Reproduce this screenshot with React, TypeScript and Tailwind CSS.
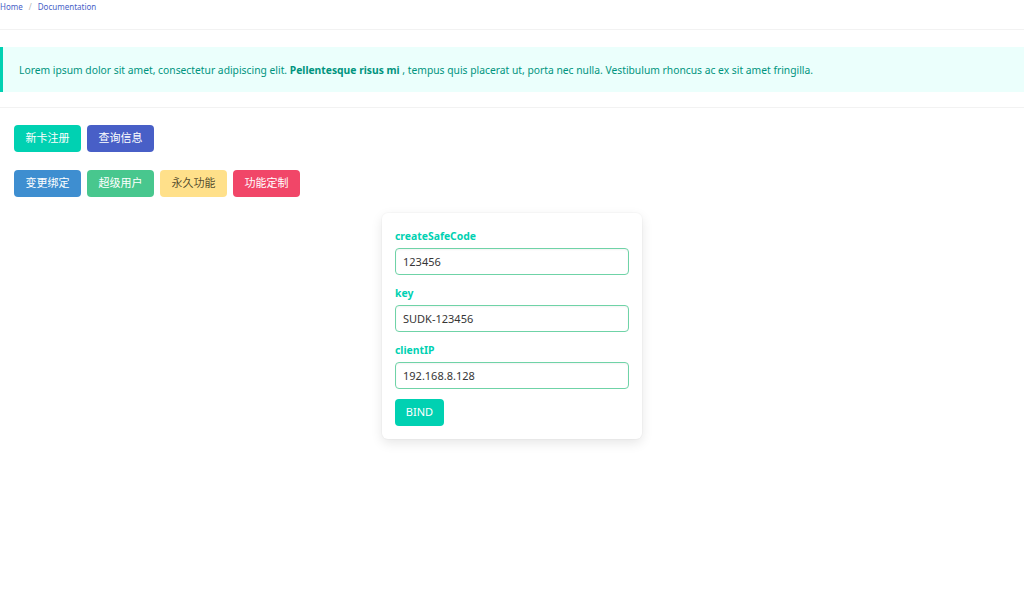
const font = "font-['Noto_Sans','Noto_Sans_CJK_SC',sans-serif]";

const rowOne = [
  { label: "新卡注册", cls: "bg-[#00d1b2] text-white" },
  { label: "查询信息", cls: "bg-[#485fc7] text-white" },
];

const rowTwo = [
  { label: "变更绑定", cls: "bg-[#3e8ed0] text-white" },
  { label: "超级用户", cls: "bg-[#48c78e] text-white" },
  { label: "永久功能", cls: "bg-[#ffe08a] text-black/70" },
  { label: "功能定制", cls: "bg-[#f14668] text-white" },
];

const fields = [
  { label: "createSafeCode", value: "123456" },
  { label: "key", value: "SUDK-123456" },
  { label: "clientIP", value: "192.168.8.128" },
];

function Btn({ label, cls }: { label: string; cls: string }) {
  return (
    <button className={`h-[27px] w-[67px] rounded-[4px] text-[11px] ${cls}`}>
      {label}
    </button>
  );
}

export default function App() {
  return (
    <div className={`min-h-[607px] bg-white text-[#4a4a4a] ${font}`}>
      {/* breadcrumb */}
      <nav className="flex h-[14px] items-center text-[8px] text-[#485fc7]">
        <span>Home</span>
        <span className="px-[6px] text-[#b5b5b5]">/</span>
        <span>Documentation</span>
      </nav>
      <div className="mt-[15px] h-px bg-[#f2f2f2]" />

      {/* notification */}
      <div className="mt-[17px] flex h-[45px] items-center border-l-[3px] border-[#00d1b2] bg-[#ebfffc] pl-[16px] pt-[2px] text-[10.3px] text-[#00947e]">
        <p>
          Lorem ipsum dolor sit amet, consectetur adipiscing elit.{" "}
          <strong className="font-bold">Pellentesque risus mi</strong> , tempus
          quis placerat ut, porta nec nulla. Vestibulum rhoncus ac ex sit amet
          fringilla.
        </p>
      </div>
      <div className="mt-[15px] h-px bg-[#f2f2f2]" />

      {/* buttons */}
      <div className="flex flex-col gap-[18px] px-[14px] pt-[17px]">
        <div className="flex gap-[6px]">
          {rowOne.map((b) => (
            <Btn key={b.label} {...b} />
          ))}
        </div>
        <div className="flex gap-[6px]">
          {rowTwo.map((b) => (
            <Btn key={b.label} {...b} />
          ))}
        </div>
      </div>

      {/* form card */}
      <div className="flex justify-center pt-[16px]">
        <div className="w-[260px] rounded-[6px] bg-white px-[13px] pb-[13px] pt-[15px] shadow-[0_4px_12px_rgba(10,10,10,0.1),0_0_0_1px_rgba(10,10,10,0.02)]">
          {fields.map((f, i) => (
            <div
              key={f.label}
              className={i === fields.length - 1 ? "mb-[9px]" : "mb-[10px]"}
            >
              <label className="block text-[10.4px] font-bold leading-[16px] text-[#00d1b2]">
                {f.label}
              </label>
              <input
                readOnly
                value={f.value}
                className="mt-[4px] h-[27px] w-full rounded-[4px] border border-[#6fd3a7] px-[7px] text-[11px] text-[#363636] shadow-[inset_0_1px_2px_rgba(10,10,10,0.05)] outline-none"
              />
            </div>
          ))}
          <button className="h-[27px] w-[49px] rounded-[4px] bg-[#00d1b2] text-[11px] text-white">
            BIND
          </button>
        </div>
      </div>
    </div>
  );
}
